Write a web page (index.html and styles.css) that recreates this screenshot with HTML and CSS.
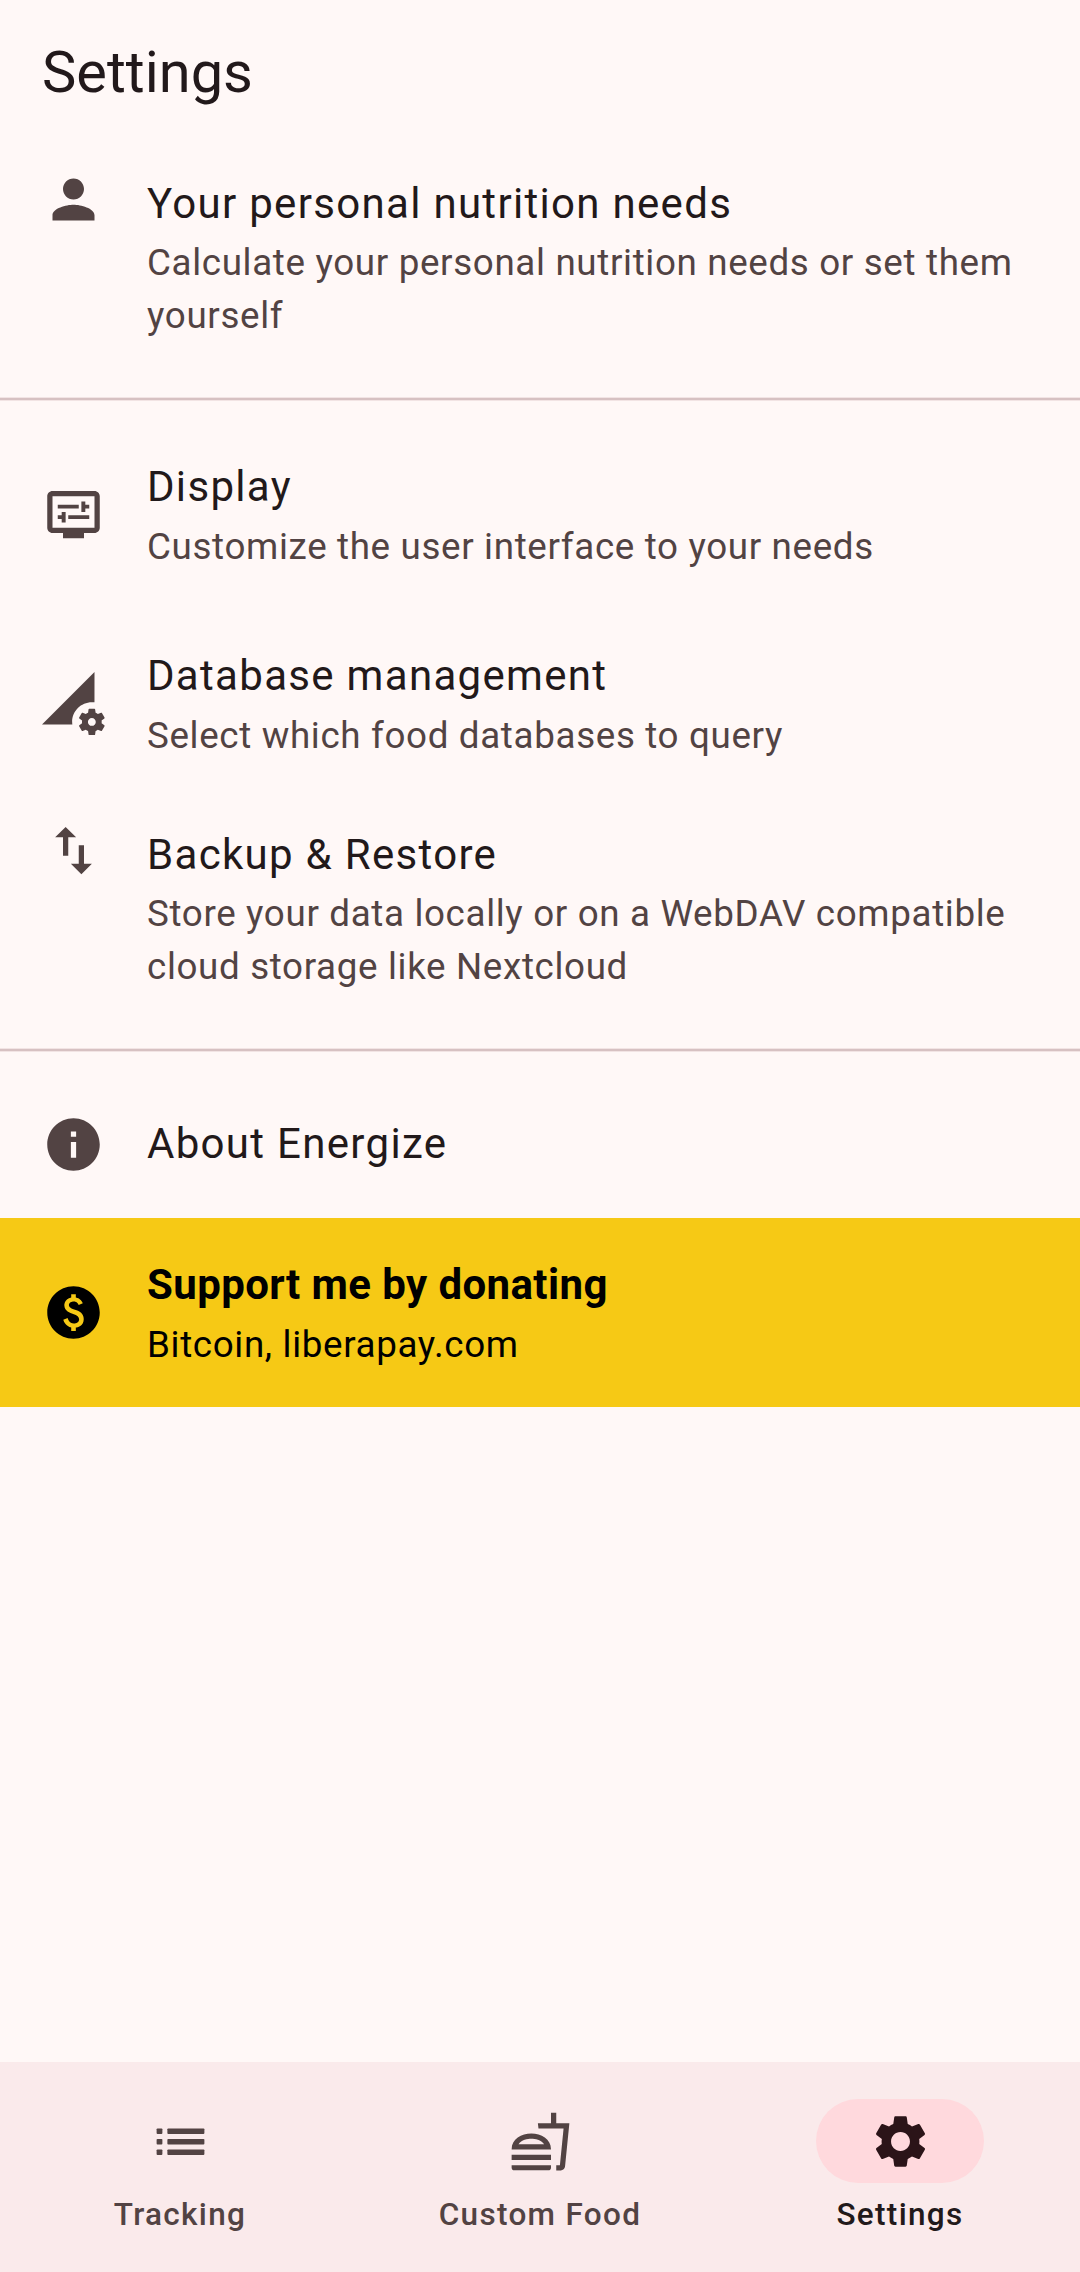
FILE: index.html
```html
<!DOCTYPE html>
<html lang="en">
<head>
<meta charset="utf-8">
<title>Settings</title>
<link rel="stylesheet" href="styles.css">
</head>
<body>
<header class="app-bar"><h1>Settings</h1></header>
<main>
<a class="item three"><svg class="icon" viewBox="0 0 24 24"><path d="M12 12c2.21 0 4-1.79 4-4s-1.79-4-4-4-4 1.790-4 4 1.790 4 4 4zm0 2c-2.670 0-8 1.340-8 4v2h16v-2c0-2.660-5.330-4-8-4z"/></svg><div class="text"><div class="title">Your personal nutrition needs</div><div class="sub">Calculate your personal nutrition needs or set them yourself</div></div></a>
<hr class="divider">
<a class="item two"><svg class="icon" viewBox="0 0 24 24"><path d="M6 8.250h8v1.500H6zm10.500 1.500H18v-1.500h-1.500V7H15v4h1.500zM10 12.250h8v1.500h-8zM7.500 15H9v-4H7.500v1.250H6v1.500h1.500z"/><path d="M20 3H4c-1.100 0-2 .9-2 2v12c0 1.100.9 2 2 2h4v2h8v-2h4c1.100 0 2-.9 2-2V5c0-1.100-.9-2-2-2zm0 14H4V5h16v12z"/></svg><div class="text"><div class="title">Display</div><div class="sub">Customize the user interface to your needs</div></div></a>
<a class="item two"><svg class="icon" viewBox="0 0 24 24"><path d="M18.990 11.500c.34 0 .67.030 1 .07L20 0 0 20h11.560c-.04-.33-.07-.66-.07-1 0-4.140 3.360-7.500 7.500-7.500zm3.710 7.990c.02-.16.040-.32.040-.49 0-.17-.01-.33-.04-.49l1.060-.83c.09-.08.120-.21.060-.32l-1-1.730c-.06-.11-.19-.15-.31-.11l-1.240.5c-.26-.2-.54-.37-.85-.49l-.19-1.320c-.01-.12-.12-.21-.24-.21h-2c-.12 0-.23.090-.25.210l-.19 1.320c-.3.130-.59.290-.85.490l-1.240-.5c-.11-.04-.24 0-.31.110l-1 1.730c-.06.110-.04.240.06.320l1.060.83c-.02.160-.03.320-.03.490 0 .17.010.33.030.49l-1.060.83c-.09.080-.12.210-.06.320l1 1.730c.06.110.19.150.31.110l1.240-.5c.26.2.54.37.85.49l.19 1.320c.02.120.12.210.25.210h2c.12 0 .23-.09.240-.21l.19-1.320c.3-.13.590-.29.840-.49l1.250.5c.11.040.24 0 .31-.11l1-1.730c.06-.11.030-.24-.06-.32l-1.050-.83zM18.990 20.500c-.83 0-1.500-.67-1.500-1.500s.67-1.500 1.500-1.500 1.500.67 1.500 1.500-.67 1.500-1.500 1.500z"/></svg><div class="text"><div class="title">Database management</div><div class="sub">Select which food databases to query</div></div></a>
<a class="item three"><svg class="icon" viewBox="0 0 24 24"><path d="M16 17.010V10h-2v7.010h-3L15 21l4-3.990h-3zM9 3L5 6.990h3V14h2V6.990h3L9 3z"/></svg><div class="text"><div class="title">Backup &amp; Restore</div><div class="sub">Store your data locally or on a WebDAV compatible cloud storage like Nextcloud</div></div></a>
<hr class="divider">
<a class="item one"><svg class="icon" viewBox="0 0 24 24"><path d="M12 2C6.480 2 2 6.480 2 12s4.480 10 10 10 10-4.480 10-10S17.520 2 12 2zm1 15h-2v-6h2v6zm0-8h-2V7h2v2z"/></svg><div class="text"><div class="title">About Energize</div></div></a>
<a class="item two donate"><svg class="icon" viewBox="0 0 24 24"><path d="M12 2C6.480 2 2 6.480 2 12s4.480 10 10 10 10-4.480 10-10S17.520 2 12 2zm.88 15.760V19h-1.750v-1.290c-.74-.18-2.390-.77-3.020-2.960l1.650-.67c.06.220.58 2.090 2.400 2.090.93 0 1.980-.48 1.980-1.610 0-.96-.7-1.460-2.280-2.030-1.100-.39-3.350-1.030-3.350-3.310 0-.1.010-2.400 2.620-2.960V5h1.750v1.240c1.840.32 2.510 1.790 2.660 2.230l-1.580.67c-.11-.35-.59-1.340-1.900-1.340-.7 0-1.810.37-1.810 1.390 0 .95.860 1.310 2.640 1.900 2.400.83 3.010 2.050 3.010 3.450 0 2.630-2.500 3.130-3.020 3.220z"/></svg><div class="text"><div class="title">Support me by donating</div><div class="sub">Bitcoin, liberapay.com</div></div></a>
</main>
<nav class="tabs">
<a class="tab"><span class="pill"><svg class="icon" viewBox="0 0 24 24"><rect x="2.900" y="7" width="2.200" height="2.100" rx=".35"/><rect x="2.900" y="11" width="2.200" height="2.100" rx=".35"/><rect x="2.900" y="15" width="2.200" height="2.100" rx=".35"/><rect x="7" y="7" width="14.100" height="2.100" rx=".35"/><rect x="7" y="11" width="14.100" height="2.100" rx=".35"/><rect x="7" y="15" width="14.100" height="2.100" rx=".35"/></svg></span><span class="label">Tracking</span></a>
<a class="tab"><span class="pill"><svg class="icon" viewBox="0 0 24 24"><path d="M1 21.980c0 .56.450 1.010 1.010 1.010H15c.56 0 1.010-.45 1.010-1.010V21H1v.98zM8.500 8.990C4.750 8.990 1 11 1 15h15c0-4-3.750-6.010-7.500-6.010zM3.620 13c1.110-1.550 3.470-2.010 4.880-2.010s3.770.46 4.880 2.010H3.620zM1 17h15v2H1zM18 5V1h-2v4h-5l.23 2h9.560l-1.400 14H18v2h1.720c.84 0 1.530-.65 1.630-1.470L23 5h-5z"/></svg></span><span class="label">Custom Food</span></a>
<a class="tab active"><span class="pill"><svg class="icon" viewBox="0 0 24 24"><path d="M19.140 12.940c.04-.3.060-.61.060-.94 0-.32-.02-.64-.07-.94l2.030-1.580c.18-.14.230-.41.120-.61l-1.920-3.320c-.12-.22-.37-.29-.59-.22l-2.390.96c-.5-.38-1.030-.7-1.620-.94l-.36-2.540c-.04-.24-.24-.41-.48-.41h-3.840c-.24 0-.43.170-.47.410l-.36 2.540c-.59.240-1.130.57-1.620.94l-2.390-.96c-.22-.08-.47 0-.59.220L2.740 8.870c-.12.210-.08.470.12.610l2.030 1.580c-.05.3-.09.630-.09.940s.02.640.07.940l-2.030 1.580c-.18.140-.23.410-.12.610l1.920 3.320c.12.220.37.290.59.220l2.390-.96c.5.380 1.030.7 1.620.94l.36 2.540c.05.240.24.410.48.410h3.840c.24 0 .44-.17.470-.41l.36-2.540c.59-.24 1.130-.56 1.620-.94l2.390.96c.22.080.47 0 .59-.22l1.920-3.320c.12-.22.070-.47-.12-.61l-2.010-1.580zM12 15.600c-1.980 0-3.600-1.620-3.600-3.600s1.620-3.600 3.600-3.600 3.600 1.620 3.600 3.600-1.620 3.600-3.600 3.600z"/></svg></span><span class="label">Settings</span></a>
</nav>
</body>
</html>
```
FILE: styles.css
```css
* { box-sizing: border-box; }
body {
  margin: 0;
  height: 2272px;
  display: flex;
  flex-direction: column;
  background: #fff8f7;
  color: #22191b;
  font-family: Roboto, "Liberation Sans", sans-serif;
}
.app-bar {
  height: 147px;
  padding: 0 42px;
}
h1 {
  margin: 0;
  font-size: 57.750px;
  line-height: 144px;
  font-weight: 400;
}
main {
  flex: 1;
  display: flex;
  flex-direction: column;
}
.divider {
  width: 100%;
  height: 4px;
  margin: 19px 0;
  border: solid #f2e4e4;
  border-width: 1px 0;
  background: #d7c1c2;
}
.item {
  display: flex;
  align-items: center;
  gap: 42px;
  padding: 0 42px;
  color: #524343;
}
.one { height: 147px; }
.two { height: 189px; }
.three {
  height: 231px;
  align-items: flex-start;
  padding-top: 21px;
}
.three .text { padding-top: 4px; }
.icon {
  width: 63px;
  height: 63px;
  flex: none;
  fill: currentColor;
}
.text { flex: 1; }
.title {
  font-size: 42px;
  line-height: 63px;
  letter-spacing: 1.310px;
  color: #22191a;
}
.two .title { line-height: 62px; padding-bottom: 2px; }
.one .text { padding-bottom: 2px; }
.sub {
  font-size: 36.750px;
  line-height: 53px;
  letter-spacing: .656px;
}
.three .sub { padding-top: 1px; }
.donate { background: #f6c915; color: #000; }
.donate .title { color: #000; font-weight: 700; letter-spacing: .394px; }
.tabs {
  height: 210px;
  display: flex;
  background: #faeaeb;
  color: #524343;
}
.tab {
  flex: 1;
  display: flex;
  flex-direction: column;
  align-items: center;
  padding-top: 37px;
  gap: 11px;
}
.pill {
  width: 168px;
  height: 84px;
  border-radius: 42px;
  display: flex;
  align-items: center;
  justify-content: center;
}
.active .pill { background: #ffd9dd; color: #2b1418; }
.label {
  font-size: 31.500px;
  line-height: 42px;
  font-weight: 500;
  letter-spacing: 1.310px;
}
.active .label { color: #22191a; }
```
